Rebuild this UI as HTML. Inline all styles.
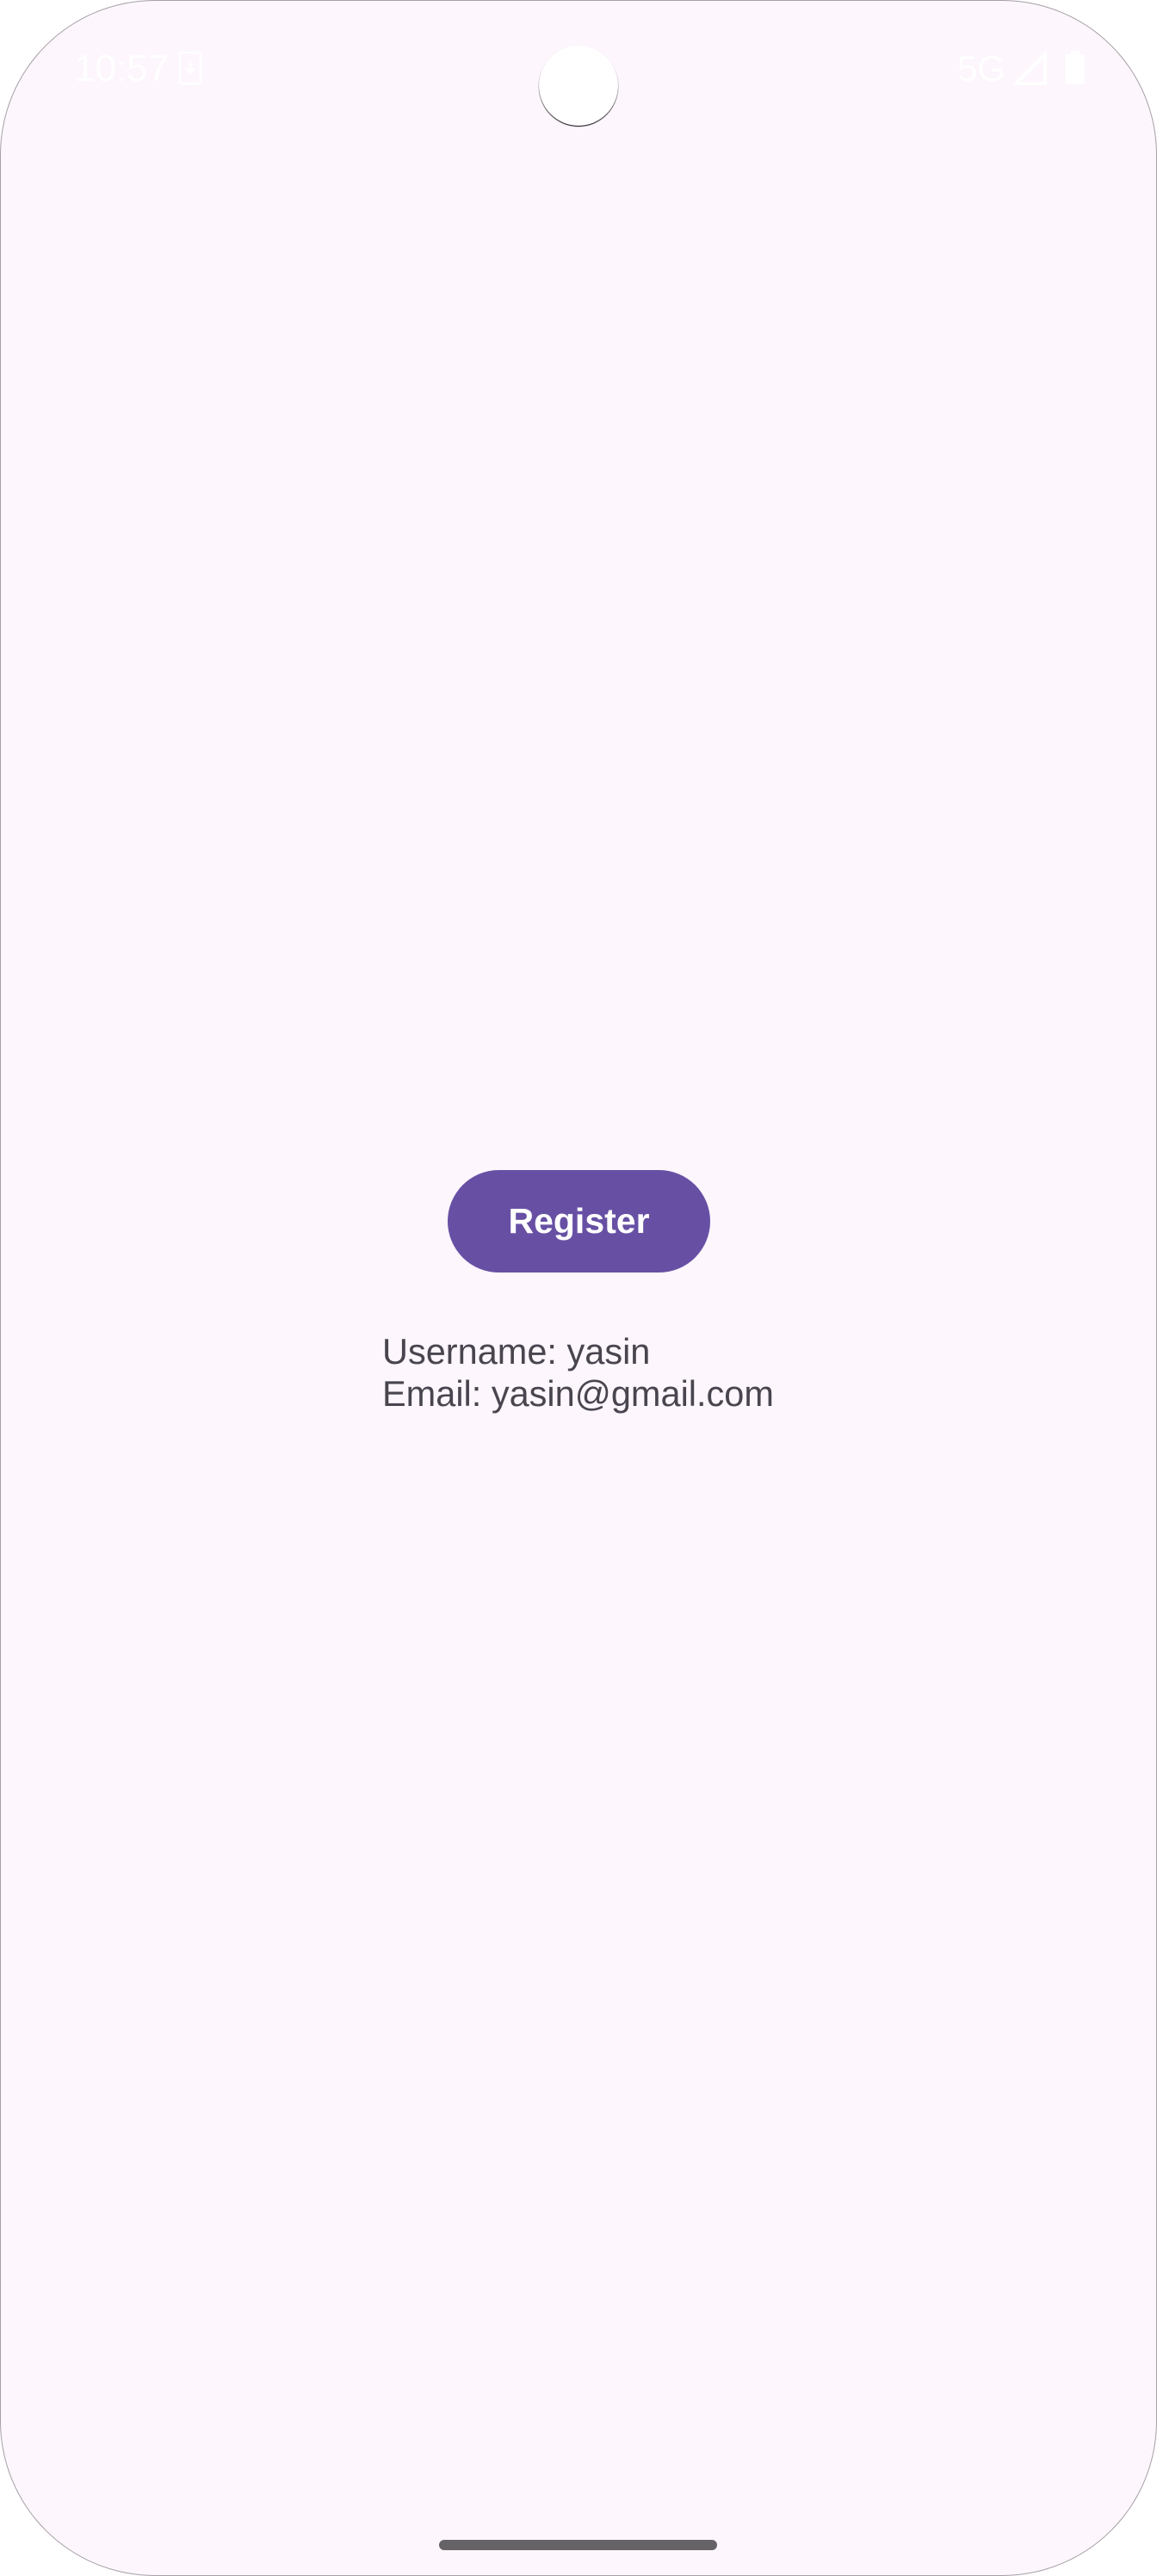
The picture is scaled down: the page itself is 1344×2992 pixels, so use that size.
<!DOCTYPE html>
<html><head><meta charset="utf-8"><style>
html,body{margin:0;padding:0;background:#fff;}
body{width:1344px;height:2992px;position:relative;overflow:hidden;font-family:"Liberation Sans",sans-serif;}
.screen{position:absolute;left:0;top:0;width:1344px;height:2992px;background:#fdf6fd;border-radius:180px;box-shadow:inset 0 0 0 1px rgba(0,0,0,0.35);}
.st{position:absolute;color:#fff;font-size:44px;line-height:44px;}
.cam{position:absolute;left:626px;top:53px;width:92px;height:93px;border-radius:50%;background:#fff;box-shadow:0 1px 1px #000;}
.btn{position:absolute;left:520px;top:1359px;width:305px;height:119px;border-radius:60px;background:#6750a4;color:#fff;font-size:41px;font-weight:600;text-align:center;line-height:119px;}
.txt{position:absolute;left:444px;top:1545px;color:#49454f;font-size:41.5px;line-height:49px;}
.bar{position:absolute;left:510px;top:2950px;width:323px;height:12px;border-radius:6px;background:#656366;}
</style></head><body>
<div class="screen">
<div class="st" style="left:86px;top:58px;">10:57</div>
<svg style="position:absolute;left:208px;top:60px" width="28" height="40"><rect x="1" y="1" width="24" height="36" rx="3" fill="none" stroke="#fff" stroke-width="3"/><path d="M13 10v14M8 19l5 5 5-5" stroke="#fff" stroke-width="3" fill="none"/></svg>
<div class="cam"></div>
<div class="st" style="left:1112px;top:58px;font-size:42px;">5G</div>
<svg style="position:absolute;left:1176px;top:60px" width="42" height="40"><path d="M38 3V37H4Z" fill="none" stroke="#fff" stroke-width="4"/></svg>
<svg style="position:absolute;left:1236px;top:58px" width="26" height="42"><rect x="8" y="1" width="10" height="5" fill="#fff"/><rect x="1" y="5" width="23" height="35" rx="3" fill="#fff"/></svg>
<div class="btn">Register</div>
<div class="txt">Username: yasin<br>Email: yasin@gmail.com</div>
<div class="bar"></div>
</div>
</body></html>
